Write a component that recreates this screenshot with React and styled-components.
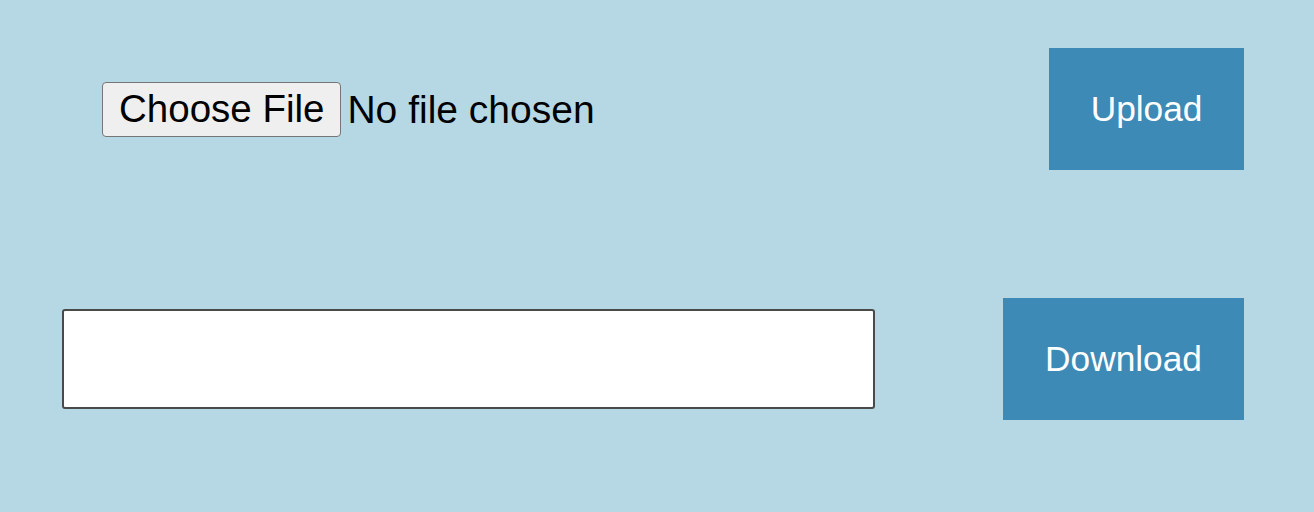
import React from 'react'
import styled, { createGlobalStyle } from 'styled-components'

const GlobalStyle = createGlobalStyle`
  html, body {
    margin: 0;
    padding: 0;
    background: #b5d8e4;
    font-family: "Liberation Sans", Arial, sans-serif;
  }
`

const Page = styled.div`
  display: flex;
  flex-direction: column;
  gap: 128px;
  padding: 48px 70px 0 62px;
  min-height: 512px;
  box-sizing: border-box;
  background: #b5d8e4;
`

const Row = styled.div`
  display: flex;
  justify-content: space-between;
  align-items: center;
`

const FileInput = styled.input`
  margin-left: 40px;
  width: 520px;
  font-family: "Liberation Sans", Arial, sans-serif;
  font-size: 39px;
  color: #000;

  &::file-selector-button {
    height: 55px;
    padding: 0 16px;
    margin-right: 6px;
    font-family: inherit;
    font-size: 38.5px;
    color: #000;
    background: #efefef;
    border: 1px solid #767676;
    border-radius: 4px;
  }
`

const TextBox = styled.input`
  width: 813px;
  height: 100px;
  box-sizing: border-box;
  border: 2px solid #4a4a4a;
  border-radius: 3px;
  background: #fff;
  font-family: "Liberation Sans", Arial, sans-serif;
  font-size: 35px;
  padding: 0 12px;
  outline: none;
`

const ActionButton = styled.button`
  height: 122px;
  padding: 0 ${p => p.$pad}px;
  border: none;
  background: #3d8ab6;
  color: #fff;
  font-family: "Liberation Sans", Arial, sans-serif;
  font-size: 35.3px;
  cursor: pointer;
`

export default function App() {
  return (
    <>
      <GlobalStyle />
      <Page>
        <Row>
          <FileInput type="file" />
          <ActionButton $pad={41.5}>Upload</ActionButton>
        </Row>
        <Row>
          <TextBox type="text" />
          <ActionButton $pad={42}>Download</ActionButton>
        </Row>
      </Page>
    </>
  )
}
